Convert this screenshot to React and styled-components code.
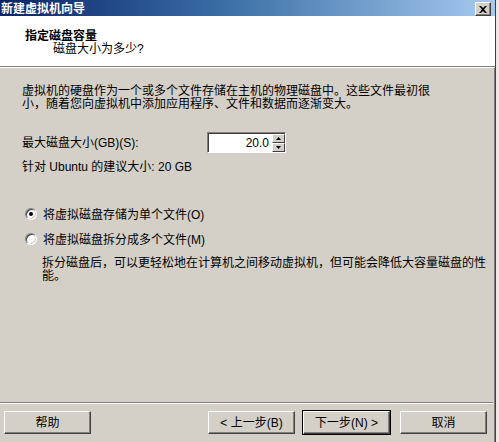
import React from 'react';
import styled, { createGlobalStyle } from 'styled-components';

const Global = createGlobalStyle`
  html, body { margin: 0; padding: 0; background: #ece9e4; }
  body {
    font-family: "Liberation Sans", "Noto Sans CJK SC", sans-serif;
    font-size: 12px;
    color: #000;
  }
`;

const Window = styled.div`
  width: 496px;
  height: 442px;
  box-sizing: border-box;
  background: #d4d0c8;
  border-right: 1px solid #404040;
  box-shadow: inset -1px 0 0 #808080;
  display: flex;
  flex-direction: column;
`;

const TitleBar = styled.div`
  height: 16px;
  flex: none;
  display: flex;
  align-items: center;
  justify-content: space-between;
  padding: 0 4px 0 1px;
  background: linear-gradient(90deg, #0a246a 0%, #3a6ea5 45%, #a6caf0 100%);
`;

const TitleText = styled.span`
  color: #fff;
  font-weight: bold;
  font-size: 12px;
  line-height: 16px;
  font-family: "Noto Sans CJK SC", sans-serif;
`;

const CloseButton = styled.div`
  width: 16px;
  height: 14px;
  box-sizing: border-box;
  background: #d4d0c8;
  border-top: 1px solid #fff;
  border-left: 1px solid #fff;
  border-right: 1px solid #404040;
  border-bottom: 1px solid #404040;
  box-shadow: inset -1px -1px 0 #808080;
  display: flex;
  align-items: center;
  justify-content: center;
  margin-top: 2px;
`;

const Header = styled.div`
  height: 51px;
  flex: none;
  background: #fff;
  padding: 14px 0 0 25px;
  box-sizing: border-box;
  border-bottom: 1px solid #808080;
  box-shadow: 0 1px 0 #fff;
`;

const HeaderTitle = styled.div`
  font-weight: bold;
  line-height: 12px;
  height: 12px;
`;

const HeaderSub = styled.div`
  line-height: 12px;
  padding-left: 28px;
  margin-top: 1px;
`;

const Body = styled.div`
  flex: 1;
  padding: 18px 22px 0 22px;
  display: flex;
  flex-direction: column;
`;

const Paragraph = styled.p`
  margin: 0;
  line-height: 13px;
  width: 420px;
`;

const SizeRow = styled.div`
  display: flex;
  align-items: center;
  height: 21px;
  margin-top: 21px;
`;

const SizeLabel = styled.span`
  width: 185px;
  line-height: 12px;
`;

const SpinBox = styled.div`
  display: flex;
  width: 79px;
  height: 21px;
  box-sizing: border-box;
  border-top: 1px solid #808080;
  border-left: 1px solid #808080;
  border-right: 1px solid #fff;
  border-bottom: 1px solid #fff;
`;

const SpinInput = styled.div`
  flex: 1;
  background: #fff;
  border-top: 1px solid #404040;
  border-left: 1px solid #404040;
  text-align: right;
  padding-right: 3px;
  line-height: 18px;
  font-size: 12px;
`;

const SpinButtons = styled.div`
  width: 13px;
  display: flex;
  flex-direction: column;
  background: #fff;
  border-top: 1px solid #404040;
`;

const SpinButton = styled.div`
  flex: 1;
  box-sizing: border-box;
  background: #d4d0c8;
  border-top: 1px solid #fff;
  border-left: 1px solid #fff;
  border-right: 1px solid #404040;
  border-bottom: 1px solid #404040;
  display: flex;
  align-items: center;
  justify-content: center;
`;

const Hint = styled.div`
  margin-top: 8px;
  line-height: 12px;
`;

const RadioGroup = styled.div`
  margin-top: 34px;
  display: flex;
  flex-direction: column;
  gap: 12px;
`;

const RadioRow = styled.label`
  display: flex;
  align-items: center;
  height: 13px;
  gap: 6px;
  padding-left: 3px;
`;

const RadioCircle = styled.span`
  width: 12px;
  height: 12px;
  box-sizing: border-box;
  border-radius: 50%;
  background: #fff;
  border: 1px solid;
  border-color: #808080 #fff #fff #808080;
  box-shadow: inset 1px 1px 0 #404040, inset -1px -1px 0 #d4d0c8;
  display: flex;
  align-items: center;
  justify-content: center;
  flex: none;

  &::after {
    content: '';
    width: 4px;
    height: 4px;
    border-radius: 50%;
    background: ${(p) => (p.$checked ? '#000' : 'transparent')};
  }
`;

const Description = styled.p`
  margin: 12px 0 0 20px;
  line-height: 13px;
  width: 450px;
`;

const Footer = styled.div`
  flex: none;
  border-top: 1px solid #808080;
  box-shadow: inset 0 1px 0 #fff;
  margin-right: 2px;
  padding: 8px 6px 8px 4px;
  display: flex;
  align-items: center;
`;

const Button = styled.div`
  width: 88px;
  height: 23px;
  box-sizing: border-box;
  display: flex;
  align-items: center;
  justify-content: center;
  background: #d4d0c8;
  border-top: 1px solid #fff;
  border-left: 1px solid #fff;
  border-right: 1px solid #404040;
  border-bottom: 1px solid #404040;
  box-shadow: inset -1px -1px 0 #808080;
  outline: ${(p) => (p.$default ? '1px solid #000' : 'none')};
  margin-left: ${(p) => p.$gap || 0}px;
  line-height: 12px;
`;

export default function App() {
  return (
    <>
      <Global />
      <Window>
        <TitleBar>
          <TitleText>新建虚拟机向导</TitleText>
          <CloseButton>
            <svg width="8" height="7" viewBox="0 0 8 7">
              <path d="M0 0h2l2 2 2-2h2L5 3.5 8 7H6L4 5 2 7H0l3-3.5z" fill="#000" />
            </svg>
          </CloseButton>
        </TitleBar>
        <Header>
          <HeaderTitle>指定磁盘容量</HeaderTitle>
          <HeaderSub>磁盘大小为多少?</HeaderSub>
        </Header>
        <Body>
          <Paragraph>
            虚拟机的硬盘作为一个或多个文件存储在主机的物理磁盘中。这些文件最初很小，随着您向虚拟机中添加应用程序、文件和数据而逐渐变大。
          </Paragraph>
          <SizeRow>
            <SizeLabel>最大磁盘大小(GB)(S):</SizeLabel>
            <SpinBox>
              <SpinInput>20.0</SpinInput>
              <SpinButtons>
                <SpinButton>
                  <svg width="5" height="3" viewBox="0 0 5 3"><path d="M2.5 0L5 3H0z" fill="#000" /></svg>
                </SpinButton>
                <SpinButton>
                  <svg width="5" height="3" viewBox="0 0 5 3"><path d="M0 0h5L2.5 3z" fill="#000" /></svg>
                </SpinButton>
              </SpinButtons>
            </SpinBox>
          </SizeRow>
          <Hint>针对 Ubuntu 的建议大小: 20 GB</Hint>
          <RadioGroup>
            <RadioRow>
              <RadioCircle $checked />
              <span>将虚拟磁盘存储为单个文件(O)</span>
            </RadioRow>
            <RadioRow>
              <RadioCircle />
              <span>将虚拟磁盘拆分成多个文件(M)</span>
            </RadioRow>
          </RadioGroup>
          <Description>
            拆分磁盘后，可以更轻松地在计算机之间移动虚拟机，但可能会降低大容量磁盘的性能。
          </Description>
        </Body>
        <Footer>
          <Button>帮助</Button>
          <Button $gap={117}>&lt; 上一步(B)</Button>
          <Button $gap={8} $default>下一步(N) &gt;</Button>
          <Button $gap={10}>取消</Button>
        </Footer>
      </Window>
    </>
  );
}
